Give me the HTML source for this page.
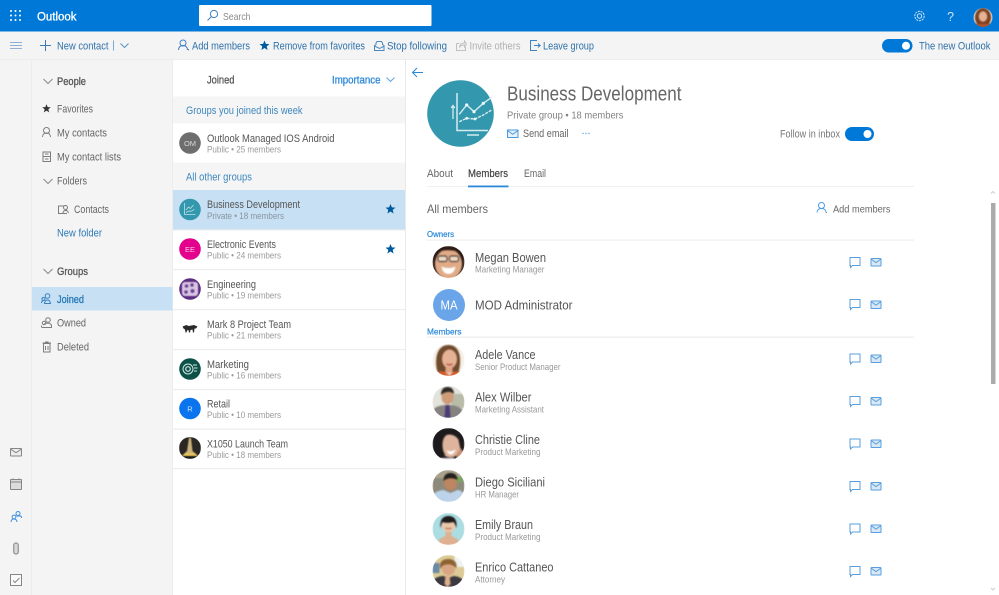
<!DOCTYPE html>
<html lang="en"><head><meta charset="utf-8"><title>Outlook</title>
<style>
html,body{margin:0;padding:0;width:999px;height:595px;overflow:hidden;background:#fff}
svg{display:block;filter:blur(.35px)}
text{font-family:"Liberation Sans",sans-serif;font-size:11px;fill:#5c5c5c}
.nav{font-size:11px;fill:#666}
.tb{font-size:11px;fill:#2f72ab}
.t{font-size:11px;fill:#555}
.s{font-size:9.2px;fill:#9a9a9a}
.n{font-size:12.5px;fill:#555}
.j{font-size:9.2px;fill:#999}
.b{stroke:#555;stroke-width:.3px}
.ln{fill:none;stroke:#4a90d0;stroke-width:1}
.gr{fill:none;stroke:#7d7d7d;stroke-width:1}
.p{filter:blur(.75px)}
</style></head><body>
<svg width="999" height="595" viewBox="0 0 999 595" xmlns="http://www.w3.org/2000/svg">
<defs>
<clipPath id="c16"><circle r="16"/></clipPath>
<clipPath id="c11"><circle r="11"/></clipPath>
<clipPath id="c9"><circle r="9.5"/></clipPath>
<g id="mail"><rect x="871" y="-4" width="10" height="7.5" rx=".8" fill="#d7e8f6" stroke="#5a9fdc"/><path d="M871 -3.5l5 3.6 5-3.6" fill="none" stroke="#5a9fdc"/></g>
<g id="chat2"><path d="M850 -5h10v8h-7.5l-2 2v-2h-.5z" fill="none" stroke="#5a9fdc"/></g>
<path id="star" d="M0-5l1.4 3.4 3.6.2-2.8 2.3.9 3.6L0 2.5-3.1 4.5l.9-3.6L-5-1.4l3.6-.2z"/>
</defs>

<!-- backgrounds -->
<rect width="999" height="595" fill="#fff"/>
<rect y="0" width="999" height="31.5" fill="#0078d7"/>
<rect y="31.5" width="999" height="28" fill="#f4f4f4"/>
<rect y="59" width="999" height="1" fill="#ececec"/>
<rect y="60" x="0" width="172.5" height="535" fill="#f4f4f4"/>
<rect x="31" y="60" width="1" height="535" fill="#ececec"/>
<rect x="405" y="60" width="1" height="535" fill="#e9e9e9"/>
<rect x="172" y="60" width="1" height="535" fill="#ececec"/>

<!-- top bar -->
<g fill="#fff">
<circle cx="11" cy="11" r="1"/><circle cx="15.500" cy="11" r="1"/><circle cx="20" cy="11" r="1"/>
<circle cx="11" cy="15.500" r="1"/><circle cx="15.500" cy="15.500" r="1"/><circle cx="20" cy="15.500" r="1"/>
<circle cx="11" cy="20" r="1"/><circle cx="15.500" cy="20" r="1"/><circle cx="20" cy="20" r="1"/>
</g>
<text x="37" y="20.500" textLength="39.500" lengthAdjust="spacingAndGlyphs" style="font-size:11.500px;fill:#fff;stroke:#fff;stroke-width:.3px">Outlook</text>
<rect x="199" y="5" width="232.500" height="21" rx="1" fill="#fff"/>
<circle cx="214" cy="14" r="3.600" fill="none" stroke="#3b7fc0"/><path d="M211.500 16.500l-4 4" stroke="#3b7fc0" fill="none"/>
<text x="223" y="20" textLength="27.500" lengthAdjust="spacingAndGlyphs" style="font-size:10.500px;fill:#8a8a8a">Search</text>
<g fill="none" stroke="#cfe4f7" stroke-width="1">
<circle cx="919.500" cy="16" r="2.200"/><circle cx="919.500" cy="16" r="4.700" stroke-dasharray="2 .9"/>
</g>
<text x="947" y="21" textLength="7" lengthAdjust="spacingAndGlyphs" style="font-size:13px;fill:#cfe4f7">?</text>
<g transform="translate(983,17.500)" clip-path="url(#c9)"><g class="p">
<rect x="-10" y="-10" width="20" height="20" fill="#e6d9cf"/>
<ellipse cy="0" rx="8" ry="9.500" fill="#7a4022"/>
<ellipse cy="-1" rx="4.300" ry="5.200" fill="#e6b292"/>
<rect x="-10" y="6.500" width="20" height="4" fill="#b2552c"/>
</g></g>

<!-- toolbar -->
<path d="M10 42.500h12M10 45.500h12M10 48.500h12" stroke="#8fb2d4" fill="none"/>
<path d="M45.500 40v11M40 45.500h11" stroke="#3d7bb3" stroke-width="1" fill="none"/>
<text x="57" y="49.500" textLength="51.500" lengthAdjust="spacingAndGlyphs" class="tb">New contact</text>
<path d="M113.500 40.500v10" stroke="#7ea9cf"/>
<path d="M120.500 43.500l4 4 4-4" fill="none" stroke="#5b93c4"/>
<circle cx="183" cy="43" r="3" fill="none" stroke="#3c82c4"/><path d="M178.500 50c.3-3.500 2.300-4.500 4.500-4.500s4.200 1 4.500 4.500M188.500 49v1.200" fill="none" stroke="#3c82c4"/>
<text x="192" y="49.500" textLength="58" lengthAdjust="spacingAndGlyphs" class="tb">Add members</text>
<use href="#star" transform="translate(264.500,45.500)" fill="#005a9e"/>
<text x="273" y="49.500" textLength="92" lengthAdjust="spacingAndGlyphs" class="tb">Remove from favorites</text>
<path d="M374.500 50.500v-5l1.500-1v-1.500l1-1.500h4.500l1 1.500v1.500l1.500 1v5z" fill="none" stroke="#4a87bd"/><path d="M374.500 46l5 2.500 5-2.500" fill="none" stroke="#4a87bd"/>
<text x="387" y="49.500" textLength="60" lengthAdjust="spacingAndGlyphs" class="tb">Stop following</text>
<path d="M456.500 43.500h3M456.500 43.500v7h9v-3.500M459.500 47c.5-3 2.500-4 5-4V41l2 3-2 3v-2c-2 0-3.500.5-5 2z" fill="none" stroke="#c0c0c0"/>
<text x="469.500" y="49.500" textLength="51" lengthAdjust="spacingAndGlyphs" style="font-size:11px;fill:#b0b0b0">Invite others</text>
<path d="M537 40.500h-6.500v10h6.500M534 45.500h6M538 43.500l2.200 2-2.200 2" fill="none" stroke="#3c82c4"/>
<text x="543" y="49.500" textLength="51" lengthAdjust="spacingAndGlyphs" class="tb">Leave group</text>
<rect x="882" y="39" width="30.500" height="13.500" rx="6.750" fill="#0078d7"/><circle cx="906" cy="45.750" r="4" fill="#fff"/>
<text x="919" y="49.500" textLength="71.500" lengthAdjust="spacingAndGlyphs" class="tb">The new Outlook</text>

<!-- nav -->
<path d="M43.500 79l4.500 4.500 4.500-4.500" fill="none" stroke="#8a8a8a"/>
<text x="57" y="85" textLength="29" lengthAdjust="spacingAndGlyphs" class="nav b" style="fill:#555">People</text>
<use href="#star" transform="translate(46.500,108.500) scale(.85)" fill="#333"/>
<text x="57" y="112.500" textLength="36" lengthAdjust="spacingAndGlyphs" class="nav">Favorites</text>
<circle cx="46.500" cy="130.500" r="3" class="gr"/><path d="M42.500 137c.3-3.500 2-4 4-4s3.700.5 4 4" class="gr"/>
<text x="57" y="136.500" textLength="50" lengthAdjust="spacingAndGlyphs" class="nav">My contacts</text>
<rect x="43" y="152" width="7.500" height="9.500" class="gr"/><path d="M43 156.500h7.500M45 154h3.500M45 159h3.500" class="gr"/>
<text x="57" y="160.500" textLength="64" lengthAdjust="spacingAndGlyphs" class="nav">My contact lists</text>
<path d="M43.500 179l4.500 4.500 4.500-4.500" fill="none" stroke="#8a8a8a"/>
<text x="57" y="184.500" textLength="30" lengthAdjust="spacingAndGlyphs" class="nav">Folders</text>
<rect x="58.500" y="206" width="8" height="7.500" class="gr"/><circle cx="65.500" cy="207.500" r="2" fill="#f4f4f4" stroke="#7d7d7d"/><path d="M63 213c.2-2 1-2.500 2.500-2.500s2.500.5 3 2.500" fill="#f4f4f4" stroke="#7d7d7d"/>
<text x="74" y="213" textLength="35" lengthAdjust="spacingAndGlyphs" class="nav">Contacts</text>
<text x="57" y="236.500" textLength="45" lengthAdjust="spacingAndGlyphs" class="nav" style="fill:#2f7ab8">New folder</text>
<path d="M43.500 269l4.500 4.500 4.500-4.500" fill="none" stroke="#8a8a8a"/>
<text x="57" y="275" textLength="31" lengthAdjust="spacingAndGlyphs" class="nav b" style="fill:#555">Groups</text>
<rect x="32" y="287" width="140.500" height="23.500" fill="#c7e0f4"/>
<g fill="none" stroke="#3a83bd"><circle cx="47.500" cy="296" r="2.300"/><circle cx="43.500" cy="299" r="1.500"/><path d="M44.500 303.500c.3-2 1.300-3.500 3-3.500s2.700 1.500 3 3.500zM41.500 303c0-1 .5-1.800 1.200-2.200"/></g>
<text x="57" y="303" textLength="27" lengthAdjust="spacingAndGlyphs" class="nav b" style="fill:#2677b5;stroke:#2677b5">Joined</text>
<g fill="none" stroke="#7d7d7d"><circle cx="48" cy="320" r="2.300"/><circle cx="44" cy="323" r="1.700"/><path d="M42 327.500h9.500v-2.500l-2-1.800h-4l-2 1.800M41.500 327.500v-2"/></g>
<text x="57" y="326.500" textLength="29" lengthAdjust="spacingAndGlyphs" class="nav">Owned</text>
<path d="M43.500 343.500h6.500v8.500h-6.500zM42.500 343h8.500M45 342h3.500M45.500 346v4M48 346v4" class="gr"/>
<text x="57" y="350.500" textLength="32" lengthAdjust="spacingAndGlyphs" class="nav">Deleted</text>

<!-- rail -->
<rect x="10.500" y="448.500" width="11" height="7.500" rx=".6" fill="#ededed" stroke="#848484"/><path d="M10.500 449l5.500 3.800 5.500-3.800" fill="none" stroke="#848484"/>
<rect x="10.500" y="479.500" width="11" height="10" rx=".5" fill="#dcdcdc" stroke="#858585"/><path d="M10.500 482h11M13 478.500v1.500M19 478.500v1.500" stroke="#858585" fill="none"/>
<g fill="none" stroke="#3c8fdb"><circle cx="18" cy="513.500" r="2"/><circle cx="14" cy="517" r="1.900"/><path d="M11 522c.2-2 1-3 3-3s2.800 1 3 3M16.500 516h4c.8 0 1 1 1 2"/></g>
<rect x="13.700" y="543" width="4.600" height="11" rx="2.300" fill="#d8d8d8" stroke="#8f8f8f" stroke-width="1.200"/>
<rect x="10.500" y="574.500" width="11" height="11" fill="#fafafa" stroke="#858585"/><path d="M13 580.500l2 2 4.500-4.500" fill="none" stroke="#858585"/>

<!-- list header -->
<text x="207" y="83.500" textLength="27.500" lengthAdjust="spacingAndGlyphs" class="t b">Joined</text>
<text x="332" y="83.500" textLength="48.500" lengthAdjust="spacingAndGlyphs" style="fill:#2b88d8;font-size:11px;stroke:#2b88d8;stroke-width:.3px">Importance</text>
<path d="M386.500 77.500l4 4 4-4" fill="none" stroke="#60a5e0"/>
<rect x="173" y="96.500" width="232" height="27" fill="#f5f5f5"/>
<text x="186" y="114" textLength="116.500" lengthAdjust="spacingAndGlyphs" style="font-size:11px;fill:#3e87bf">Groups you joined this week</text>
<rect x="173" y="162.500" width="232" height="27.500" fill="#f5f5f5"/>
<text x="186" y="180.500" textLength="66" lengthAdjust="spacingAndGlyphs" style="font-size:11px;fill:#3e87bf">All other groups</text>
<rect x="173" y="190" width="232" height="39.500" fill="#c7e0f4"/>
<g fill="#ededed">
<rect x="173" y="229.500" width="232" height="1"/><rect x="173" y="269" width="232" height="1.200"/><rect x="173" y="309" width="232" height="1.200"/>
<rect x="173" y="349" width="232" height="1.200"/><rect x="173" y="389" width="232" height="1.200"/><rect x="173" y="428.500" width="232" height="1.200"/><rect x="173" y="468" width="232" height="1.200"/>
</g>

<!-- list rows -->
<circle cx="190" cy="143" r="10.800" fill="#6e6e6e"/><text x="190" y="146" text-anchor="middle" style="font-size:7.500px;fill:#d8d8d8">OM</text>
<text x="207" y="142" textLength="127.500" lengthAdjust="spacingAndGlyphs" class="t">Outlook Managed IOS Android</text>
<text x="207" y="152.500" textLength="74" lengthAdjust="spacingAndGlyphs" class="s">Public • 25 members</text>

<circle cx="190" cy="209.500" r="10.800" fill="#3397ad"/>
<path d="M184.500 203v11.500h11M186 210l2.500-3 2 1.500 3-3.500M186 212.500l3-1.500 2 .3 3.500-2" fill="none" stroke="#bfe2ea" stroke-width=".8"/>
<text x="207" y="208" textLength="93" lengthAdjust="spacingAndGlyphs" class="t">Business Development</text>
<text x="207" y="219" textLength="77" lengthAdjust="spacingAndGlyphs" class="s" style="fill:#8a95a0">Private • 18 members</text>
<use href="#star" transform="translate(390.500,209)" fill="#005a9e"/>

<circle cx="190" cy="249" r="10.800" fill="#e3008c"/><text x="190" y="252" text-anchor="middle" style="font-size:7.500px;fill:#f9c7e4">EE</text>
<text x="207" y="248" textLength="69" lengthAdjust="spacingAndGlyphs" class="t">Electronic Events</text>
<text x="207" y="258.500" textLength="74" lengthAdjust="spacingAndGlyphs" class="s">Public • 24 members</text>
<use href="#star" transform="translate(390.500,249)" fill="#005a9e"/>

<circle cx="190" cy="289" r="10.800" fill="#5c2e81"/>
<g class="p" style="filter:blur(.4px)"><rect x="182" y="282" width="16" height="14" rx="3" fill="#d9c6e4"/>
<g fill="#6e4690"><circle cx="186.500" cy="286" r="1.800"/><circle cx="192" cy="285" r="1.800"/><circle cx="186" cy="292" r="1.800"/><circle cx="192.500" cy="291" r="2"/></g></g>
<text x="207" y="288" textLength="49" lengthAdjust="spacingAndGlyphs" class="t">Engineering</text>
<text x="207" y="298.500" textLength="74" lengthAdjust="spacingAndGlyphs" class="s">Public • 19 members</text>

<path d="M182.500 326.500l4-1.500 2 1 3-.5 2.500-.5 3.500 1.500-1.500 2h-1.500l-.5 4h-1l-.5-3-2 .5-.5 2.500h-1l-.5-2.500-1.500.5-.5 2h-1l-.5-3-1.500-1z" fill="#2a2a2a"/>
<text x="207" y="328" textLength="84" lengthAdjust="spacingAndGlyphs" class="t">Mark 8 Project Team</text>
<text x="207" y="338.500" textLength="74" lengthAdjust="spacingAndGlyphs" class="s">Public • 21 members</text>

<circle cx="190" cy="369" r="10.800" fill="#0d5047"/>
<g fill="none" stroke="#cfe7e2"><circle cx="188" cy="369" r="5" stroke-width="1"/><circle cx="188" cy="369" r="2.300" stroke-width="1.200"/><path d="M193 365h4M194 368h3.500M194 371h3" stroke-width=".9"/></g>
<text x="207" y="368" textLength="42" lengthAdjust="spacingAndGlyphs" class="t">Marketing</text>
<text x="207" y="378.500" textLength="74" lengthAdjust="spacingAndGlyphs" class="s">Public • 16 members</text>

<circle cx="190" cy="408.500" r="10.800" fill="#0a74ee"/><text x="190" y="411.500" text-anchor="middle" style="font-size:7.500px;fill:#cfe4ff">R</text>
<text x="207" y="407.500" textLength="23" lengthAdjust="spacingAndGlyphs" class="t">Retail</text>
<text x="207" y="418" textLength="74" lengthAdjust="spacingAndGlyphs" class="s">Public • 10 members</text>

<g transform="translate(190,448)" clip-path="url(#c11)"><g class="p" style="filter:blur(.4px)">
<rect x="-11" y="-11" width="22" height="22" fill="#2a2724"/>
<path d="M-1-10h2l1.500 13 5 4.500H-7.500L-3 3z" fill="#cbb27a"/><path d="M-5 5h10l3 3H-8z" fill="#e6c35c"/><rect x="-11" y="8" width="22" height="3" fill="#1a1a1a"/>
</g></g>
<text x="207" y="447.500" textLength="81" lengthAdjust="spacingAndGlyphs" class="t">X1050 Launch Team</text>
<text x="207" y="458" textLength="74" lengthAdjust="spacingAndGlyphs" class="s">Public • 18 members</text>

<!-- detail header -->
<path d="M413 72.500h10M417 68l-4.500 4.500 4.500 4.500" fill="none" stroke="#2b88d8"/>
<circle cx="460.500" cy="113.500" r="33.300" fill="#3397ad"/>
<g fill="none" stroke="#d5ecf1">
<path d="M457 93v37.500h31" stroke-width="1.500"/>
<path d="M453 106v13M451.200 108l1.800-2.500 1.800 2.500" stroke-width="1.300"/>
<path d="M459.300 114.300l7.400-9.300 7.300 6.700 9.300-8.400 8.400-6" stroke-width="1.400"/>
<path d="M459.300 121.700l7.400-3.400 8.300.7 8.300-4 8.400-5" stroke-width="1.400" stroke-dasharray="3 1"/>
<path d="M467 135h12" stroke-width="1.500"/>
</g>
<g fill="#eef8fa"><circle cx="466.700" cy="105" r="1.600"/><circle cx="474" cy="111.700" r="1.600"/><circle cx="483.300" cy="103.300" r="1.600"/><circle cx="466.700" cy="118.300" r="1.400"/><circle cx="475" cy="119" r="1.400"/></g>
<text x="507" y="100.500" textLength="174.500" lengthAdjust="spacingAndGlyphs" style="font-size:20.500px;fill:#666">Business Development</text>
<text x="507" y="118.500" textLength="116.500" lengthAdjust="spacingAndGlyphs" style="font-size:10.500px;fill:#828282">Private group • 18 members</text>
<rect x="507.500" y="130" width="10.500" height="7.500" fill="#e6f1fa" stroke="#4a9ae0"/><path d="M507.500 130.500l5.200 3.800 5.300-3.800" fill="none" stroke="#4a9ae0"/>
<text x="523" y="137" textLength="45.500" lengthAdjust="spacingAndGlyphs" style="font-size:11px;fill:#666">Send email</text>
<g fill="#5ea4de"><circle cx="583" cy="133.500" r=".7"/><circle cx="586" cy="133.500" r=".7"/><circle cx="589" cy="133.500" r=".7"/></g>
<text x="780" y="137.500" textLength="60" lengthAdjust="spacingAndGlyphs" style="font-size:11px;fill:#777">Follow in inbox</text>
<rect x="845" y="127" width="29" height="14" rx="7" fill="#0078d7"/><circle cx="867.500" cy="134" r="4" fill="#fff"/>

<text x="427" y="177" textLength="26" lengthAdjust="spacingAndGlyphs" style="font-size:11px;fill:#666">About</text>
<text x="468" y="177" textLength="40" lengthAdjust="spacingAndGlyphs" style="font-size:11px;fill:#444;stroke:#444;stroke-width:.2px">Members</text>
<text x="524" y="177" textLength="22" lengthAdjust="spacingAndGlyphs" style="font-size:11px;fill:#666">Email</text>
<rect x="427" y="186" width="487" height="1" fill="#f0f0f0"/>
<rect x="468" y="185.500" width="40.500" height="1.800" fill="#2b88d8"/>
<text x="427" y="213" textLength="61" lengthAdjust="spacingAndGlyphs" style="font-size:12px;fill:#666">All members</text>
<circle cx="821.500" cy="205.500" r="3" fill="none" stroke="#4a9ae0"/><path d="M817 212.500c.3-3.500 2.300-4 4.500-4s4.200.5 4.500 4M826.500 212v1" fill="none" stroke="#4a9ae0"/>
<text x="833" y="212.500" textLength="57.500" lengthAdjust="spacingAndGlyphs" style="font-size:10.500px;fill:#666">Add members</text>

<!-- scrollbar -->
<path d="M991 193.500l2-2 2 2" fill="none" stroke="#cfcfcf"/>
<rect x="991" y="203" width="4.500" height="181" fill="#ababab"/>
<path d="M991 588l2 2 2-2" fill="none" stroke="#cfcfcf"/>

<!-- section labels -->
<text x="427" y="237" textLength="27" lengthAdjust="spacingAndGlyphs" style="font-size:8.500px;fill:#2b88d8;stroke:#2b88d8;stroke-width:.2px">Owners</text>
<rect x="427" y="239.500" width="487" height="1.200" fill="#efefef"/>
<text x="427" y="334.500" textLength="34.500" lengthAdjust="spacingAndGlyphs" style="font-size:8.500px;fill:#2b88d8;stroke:#2b88d8;stroke-width:.2px">Members</text>
<rect x="427" y="336.500" width="487" height="1.200" fill="#ececec"/>

<!-- Megan -->
<g transform="translate(448.500,262)" clip-path="url(#c16)"><g class="p">
<rect x="-16" y="-16" width="32" height="32" fill="#2c1a14"/>
<ellipse cy="2" rx="13.500" ry="15" fill="#e0aa86"/>
<path d="M-15-8c6-5 22-5 30 0v-8H-15z" fill="#2c1a14"/>
<rect x="-10.500" y="-6" width="9" height="5.500" rx="2" fill="#efd9c4" stroke="#2a2a2a" stroke-width=".9"/><rect x="1" y="-6" width="9" height="5.500" rx="2" fill="#efd9c4" stroke="#2a2a2a" stroke-width=".9"/>
<path d="M-7 4.500c4 2 10 2 14 0-1 6-4 7.500-7 7.500S-6 10.500-7 4.500z" fill="#fff"/>
</g></g>
<text x="475" y="262" textLength="71" lengthAdjust="spacingAndGlyphs" class="n">Megan Bowen</text>
<text x="475" y="272.500" textLength="69.500" lengthAdjust="spacingAndGlyphs" class="j">Marketing Manager</text>

<!-- MOD -->
<circle cx="449" cy="305" r="16" fill="#69a5e8"/>
<text x="449" y="309.500" text-anchor="middle" textLength="17" lengthAdjust="spacingAndGlyphs" style="font-size:12.500px;fill:#fff">MA</text>
<text x="475" y="309.500" textLength="97.500" lengthAdjust="spacingAndGlyphs" class="n">MOD Administrator</text>

<!-- Adele -->
<g transform="translate(448.500,360)" clip-path="url(#c16)"><g class="p">
<rect x="-16" y="-16" width="32" height="32" fill="#f6f0e8"/>
<path d="M-11 12c-3-10-2-27 11-27s13 17 10 27z" fill="#6f4a2c"/>
<ellipse cx="1" cy="-1" rx="7.500" ry="9.500" fill="#e6b296"/>
<path d="M-3 7h7v6h-7z" fill="#e0a485"/><path d="M-16 16v-2c5-3 9-3 12-2l5 3 4-3c3-1 7-1 12 2v2z" fill="#d65f2e"/>
<path d="M-2 4c1.800 1 4.200 1 6 0" stroke="#b33a3a" stroke-width="1.200" fill="none"/>
</g></g>
<text x="475" y="359" textLength="60.500" lengthAdjust="spacingAndGlyphs" class="n">Adele Vance</text>
<text x="475" y="370" textLength="85.500" lengthAdjust="spacingAndGlyphs" class="j">Senior Product Manager</text>

<!-- Alex -->
<g transform="translate(448.500,402)" clip-path="url(#c16)"><g class="p">
<rect x="-16" y="-16" width="32" height="32" fill="#e2e3da"/>
<rect x="3" y="-8" width="13" height="14" fill="#b8bca8"/>
<ellipse cx="-1" cy="-5" rx="6" ry="7.500" fill="#cf9c78"/>
<path d="M-7.500-7c0-6 3-8 6.500-8s6.500 2 6.500 7c-3-3-9-3-13 1z" fill="#2e2a26"/>
<path d="M-16 16V8c4-4 9-5 15-5s11 1 15 5v8z" fill="#86827f"/>
<path d="M-3 3h4l1 13h-6z" fill="#4c3a78"/>
</g></g>
<text x="475" y="401.500" textLength="56.500" lengthAdjust="spacingAndGlyphs" class="n">Alex Wilber</text>
<text x="475" y="412.500" textLength="69" lengthAdjust="spacingAndGlyphs" class="j">Marketing Assistant</text>

<!-- Christie -->
<g transform="translate(448.500,444)" clip-path="url(#c16)"><g class="p">
<rect x="-16" y="-16" width="32" height="32" fill="#1c1a1c"/>
<ellipse cx="1.500" cy="2" rx="10.500" ry="11.500" transform="rotate(-15 1.500 2)" fill="#dfb49c"/>
<path d="M-16-16h32v10c-6-5-14-6-18-3-3 2-4 6-4 10 0 4 1 8 3 10h-13z" fill="#1c1a1c"/>
<path d="M-2 6c3 2 6 1.500 9-.5-.5 3-3 5-5 5s-3-2-4-4.500z" fill="#fff"/>
<path d="M10-4l6 0v14l-3 0z" fill="#201a1a"/>
<path d="M8 10l4-6 3 4-2 8h-5z" fill="#c98e74"/>
<path d="M-8 14h14v2H-8z" fill="#eee"/>
</g></g>
<text x="475" y="444" textLength="65" lengthAdjust="spacingAndGlyphs" class="n">Christie Cline</text>
<text x="475" y="455" textLength="65.500" lengthAdjust="spacingAndGlyphs" class="j">Product Marketing</text>

<!-- Diego -->
<g transform="translate(448.500,486)" clip-path="url(#c16)"><g class="p">
<rect x="-16" y="-16" width="32" height="32" fill="#8d8a7c"/>
<rect x="-16" y="-16" width="32" height="8" fill="#a9a28c"/>
<rect x="7" y="-9" width="7" height="5" fill="#75a85c"/><rect x="-1" y="-10" width="8" height="3" fill="#d97f3a"/>
<ellipse cx="2" cy="-3" rx="6.500" ry="7.500" fill="#bd8560"/>
<path d="M-5-5c0-6 3-8 7-8s7 2 7 7c-3-2-10-3-14 1z" fill="#24201c"/>
<path d="M-16 16V9c2-3 8-5 11-5l7 3 7-3c3 0 5 2 7 4v8z" fill="#bcd3ea"/>
</g></g>
<text x="475" y="486.500" textLength="70" lengthAdjust="spacingAndGlyphs" class="n">Diego Siciliani</text>
<text x="475" y="497.500" textLength="44" lengthAdjust="spacingAndGlyphs" class="j">HR Manager</text>

<!-- Emily -->
<g transform="translate(448.500,529)" clip-path="url(#c16)"><g class="p">
<rect x="-16" y="-16" width="32" height="32" fill="#abdde2"/>
<ellipse cy="-4" rx="6.800" ry="7.500" fill="#ecc6a8"/>
<path d="M-8-1c-1-9 3-12 8-12s9 3 8 12c-1-3-2-5-3-6-4 1-9 1-11 0-1 1-1 3-2 6z" fill="#1e1b1d"/>
<path d="M-3 3h6v4l6 3 2 6h-22l2-6 6-3z" fill="#dfb091"/>
<path d="M-3 -1c2 1 4 1 6 0" stroke="#a86a5a" fill="none"/>
</g></g>
<text x="475" y="529" textLength="58" lengthAdjust="spacingAndGlyphs" class="n">Emily Braun</text>
<text x="475" y="540" textLength="65.500" lengthAdjust="spacingAndGlyphs" class="j">Product Marketing</text>

<!-- Enrico -->
<g transform="translate(448.500,571)" clip-path="url(#c16)"><g class="p">
<rect x="-16" y="-16" width="32" height="32" fill="#dccb96"/>
<rect x="6" y="-16" width="10" height="12" fill="#eef2f2"/>
<rect x="-16" y="-8" width="7" height="10" fill="#6a8aa8"/>
<ellipse cy="-3" rx="6.800" ry="7.500" fill="#d8a684"/>
<path d="M-8-2c-2-8 3-10 8-10s9 3 8 9c-3-3-8-5-12-3-2 0-3 2-4 4z" fill="#8c6230"/>
<path d="M-16 16V10c3-4 8-5 11-5l5 2 5-2c4 0 8 2 11 5v6z" fill="#3b3a40"/>
<path d="M-3 5h4l1 8-3 3-3-3z" fill="#e0b08c"/>
</g></g>
<text x="475" y="571.500" textLength="78.500" lengthAdjust="spacingAndGlyphs" class="n">Enrico Cattaneo</text>
<text x="475" y="582.500" textLength="30" lengthAdjust="spacingAndGlyphs" class="j">Attorney</text>

<!-- action icons -->
<use href="#chat2" y="262.500"/><use href="#mail" y="262.500"/>
<use href="#chat2" y="304.500"/><use href="#mail" y="305"/>
<use href="#chat2" y="359"/><use href="#mail" y="359"/>
<use href="#chat2" y="401.500"/><use href="#mail" y="401.500"/>
<use href="#chat2" y="444"/><use href="#mail" y="444"/>
<use href="#chat2" y="486.500"/><use href="#mail" y="486.500"/>
<use href="#chat2" y="529"/><use href="#mail" y="529"/>
<use href="#chat2" y="571.500"/><use href="#mail" y="571.500"/>
</svg>
</body></html>
